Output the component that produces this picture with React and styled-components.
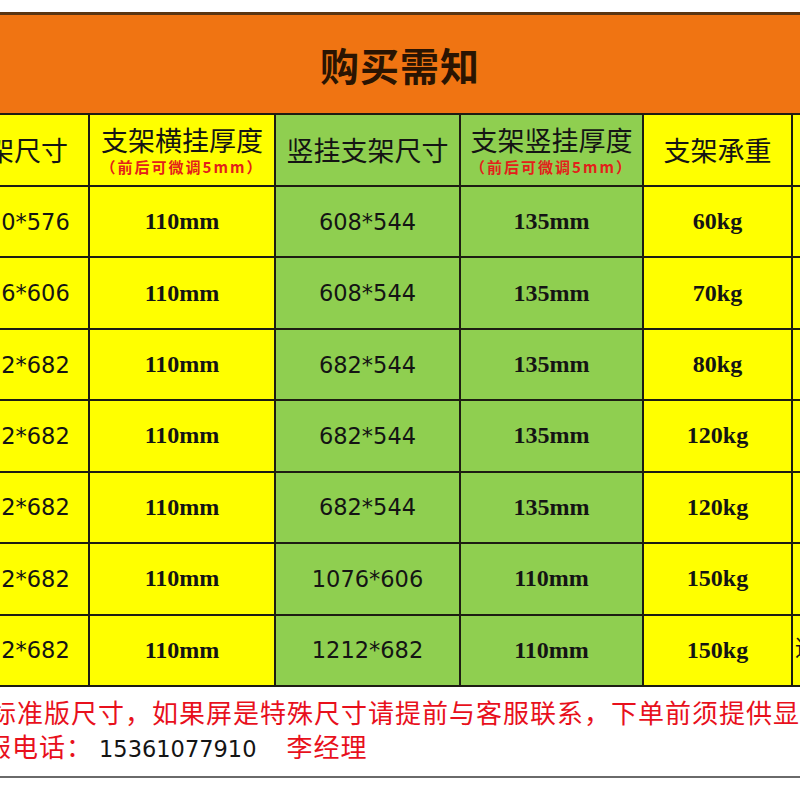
import React from "react";
import styled, { createGlobalStyle } from "styled-components";

const YELLOW = "#ffff00";
const GREEN = "#8fcf50";
const RED = "#e8101c";

const GlobalStyle = createGlobalStyle`
  html, body {
    margin: 0;
    padding: 0;
    background: #ffffff;
    overflow: hidden;
  }
`;

const columns = [
  { bg: YELLOW, head: "支架尺寸", font: "sans" },
  { bg: YELLOW, head: "支架横挂厚度", sub: "（前后可微调5mm）", font: "serif" },
  { bg: GREEN, head: "竖挂支架尺寸", font: "sans" },
  { bg: GREEN, head: "支架竖挂厚度", sub: "（前后可微调5mm）", font: "serif" },
  { bg: YELLOW, head: "支架承重", font: "serif" },
  { bg: YELLOW, head: "", font: "sans" },
];

const rows = [
  ["1020*576", "110mm", "608*544", "135mm", "60kg", ""],
  ["1076*606", "110mm", "608*544", "135mm", "70kg", ""],
  ["1212*682", "110mm", "682*544", "135mm", "80kg", ""],
  ["1212*682", "110mm", "682*544", "135mm", "120kg", ""],
  ["1212*682", "110mm", "682*544", "135mm", "120kg", ""],
  ["1212*682", "110mm", "1076*606", "110mm", "150kg", ""],
  ["1212*682", "110mm", "1212*682", "110mm", "150kg", "适用大屏"],
];

const App = () => {
  return (
    <StyledPage>
      <GlobalStyle />
      <StyledBanner>
        <StyledTitle>购买需知</StyledTitle>
      </StyledBanner>
      <StyledGrid>
        {columns.map((col, i) => (
          <StyledCell key={"h" + i} $bg={col.bg}>
            <StyledHead>{col.head}</StyledHead>
            {col.sub && <StyledSub>{col.sub}</StyledSub>}
          </StyledCell>
        ))}
        {rows.map((row, r) =>
          row.map((value, c) => (
            <StyledCell
              key={r + "-" + c}
              $bg={columns[c].bg}
              $edge={c === 5}
            >
              <StyledValue $font={columns[c].font}>{value}</StyledValue>
            </StyledCell>
          ))
        )}
      </StyledGrid>
      <StyledNotes>
        <StyledNoteLine>
          以上均为标准版尺寸，如果屏是特殊尺寸请提前与客服联系，下单前须提供显示器型号
        </StyledNoteLine>
        <StyledNoteLine $shift={22}>
          售后客服电话：<StyledPhone>15361077910</StyledPhone>李经理
        </StyledNoteLine>
      </StyledNotes>
    </StyledPage>
  );
};

const StyledPage = styled.div`
  width: 800px;
  height: 800px;
  overflow: hidden;
  padding-top: 12px;
  box-sizing: border-box;
  background: #ffffff;
`;

const StyledBanner = styled.div`
  height: 101px;
  box-sizing: border-box;
  border-top: 3px solid #5a3512;
  background: #f07412;
  display: flex;
  align-items: center;
  justify-content: center;
`;

const StyledTitle = styled.h1`
  margin: 0;
  font-family: "Noto Sans CJK SC", sans-serif;
  font-size: 39px;
  font-weight: 700;
  color: #2a1402;
  letter-spacing: 1px;
`;

const StyledGrid = styled.div`
  display: grid;
  grid-template-columns: 148px 184px 183px 181px 147px 150px;
  grid-template-rows: 70px repeat(7, 69.43px);
  gap: 2px;
  padding: 2px 0;
  margin-left: -60px;
  width: max-content;
  background: #1d1d12;
`;

const StyledCell = styled.div`
  background: ${(p) => p.$bg};
  display: flex;
  flex-direction: column;
  align-items: ${(p) => (p.$edge ? "flex-start" : "center")};
  justify-content: ${(p) => (p.$edge ? "flex-start" : "center")};
  padding: ${(p) => (p.$edge ? "14px 0 0 2px" : "0")};
  box-sizing: border-box;
  overflow: hidden;
`;

const StyledHead = styled.div`
  font-family: "Noto Sans CJK SC", sans-serif;
  font-size: 27px;
  line-height: 30px;
  color: #141414;
  white-space: nowrap;
`;

const StyledSub = styled.div`
  margin-top: 3px;
  font-family: "Noto Sans CJK SC", sans-serif;
  font-size: 15px;
  line-height: 18px;
  letter-spacing: 2px;
  font-weight: 700;
  color: #e3201a;
  white-space: nowrap;
`;

const StyledValue = styled.div`
  font-family: ${(p) =>
    p.$font === "serif"
      ? `"Liberation Serif", serif`
      : `"DejaVu Sans", "Noto Sans CJK SC", sans-serif`};
  font-size: ${(p) => (p.$font === "serif" ? "24px" : "22.5px")};
  font-weight: ${(p) => (p.$font === "serif" ? 700 : 400)};
  color: #141414;
  white-space: nowrap;
`;

const StyledNotes = styled.div`
  margin-left: -118px;
  padding-top: 8px;
  width: 1000px;
  border-bottom: 2px solid #6a6a6a;
  padding-bottom: 10px;
`;

const StyledNoteLine = styled.div`
  padding-left: ${(p) => p.$shift || 0}px;
  font-family: "Noto Sans CJK SC", sans-serif;
  font-size: 26px;
  letter-spacing: 1px;
  line-height: 34px;
  color: ${RED};
  white-space: nowrap;
`;

const StyledPhone = styled.span`
  font-family: "DejaVu Sans", sans-serif;
  font-size: 22.5px;
  letter-spacing: 0;
  color: #141414;
  margin: 0 30px 0 6px;
`;

export default App;
